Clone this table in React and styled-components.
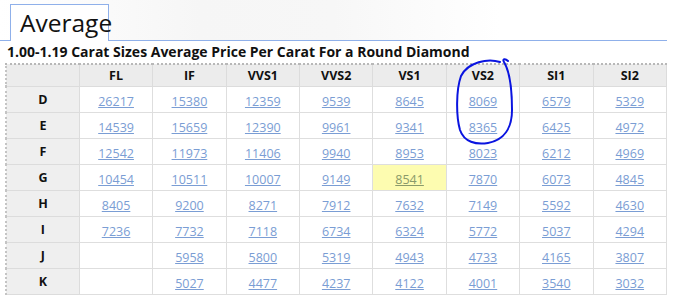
import React from 'react'
import styled, { createGlobalStyle } from 'styled-components';

const Global = createGlobalStyle`
    body {
        margin: 0;
        background: #fff;
        font-family: "Open Sans", "Noto Sans", sans-serif;
    }
`;

const Page = styled.div`
    position: relative;
    width: 686px;
    height: 300px;
    overflow: hidden;
`;

const TabBar = styled.div`
    display: flex;
    align-items: flex-end;
    width: 667px;
    height: 41px;
    border-bottom: 1px solid #8fb0ea;
    box-sizing: border-box;
    background: linear-gradient(90deg, #fff 0%, #f6f6f6 30%, #f7f7f7 50%, #fff 75%);
`;

const Tab = styled.div`
    margin-left: 10px;
    margin-bottom: -1px;
    width: 99px;
    height: 37px;
    box-sizing: border-box;
    border: 1px solid #8fb0ea;
    border-bottom: none;
    background: #fff;
    font-size: 24.5px;
    line-height: 36px;
    padding-left: 9px;
    color: #111;
`;

const Title = styled.div`
    margin: 1px 0 0 7px;
    font-size: 14px;
    font-weight: 700;
    line-height: 20px;
    color: #111;
`;

const Table = styled.table`
    margin: 1px 0 0 5px;
    width: 662px;
    border-collapse: collapse;
    table-layout: fixed;
    border-top: 2px dotted #b8b8b8;
    border-left: 2px dotted #c4c4c4;
`;

const Th = styled.th`
    height: 21px;
    padding: 0;
    background: #ececec;
    border: 1px solid #dcdcdc;
    font-size: 12.5px;
    font-weight: 700;
    color: #111;
    text-align: center;
`;

const RowHead = styled.th`
    height: 25px;
    padding: 0;
    background: #efefef;
    border: 1px solid #dcdcdc;
    font-size: 12.5px;
    font-weight: 700;
    color: #111;
`;

const Td = styled.td`
    height: 25px;
    padding: 0;
    text-align: center;
    border: 1px solid #dedede;
    background: ${p => (p.$hot ? '#fdfcb0' : '#fff')};
`;

const Price = styled.a`
    font-size: 12.5px;
    color: ${p => (p.$hot ? '#8a9a6a' : '#7a9dd4')};
    text-decoration: underline;
`;

const Circle = styled.svg`
    position: absolute;
    left: 452px;
    top: 54px;
`;

const clarities = ['FL', 'IF', 'VVS1', 'VVS2', 'VS1', 'VS2', 'SI1', 'SI2'];

const rows = [
    ['D', ['26217', '15380', '12359', '9539', '8645', '8069', '6579', '5329']],
    ['E', ['14539', '15659', '12390', '9961', '9341', '8365', '6425', '4972']],
    ['F', ['12542', '11973', '11406', '9940', '8953', '8023', '6212', '4969']],
    ['G', ['10454', '10511', '10007', '9149', '8541', '7870', '6073', '4845']],
    ['H', ['8405', '9200', '8271', '7912', '7632', '7149', '5592', '4630']],
    ['I', ['7236', '7732', '7118', '6734', '6324', '5772', '5037', '4294']],
    ['J', ['', '5958', '5800', '5319', '4943', '4733', '4165', '3807']],
    ['K', ['', '5027', '4477', '4237', '4122', '4001', '3540', '3032']],
];

const App = () => {
    return (
        <Page>
            <Global />
            <TabBar>
                <Tab>Average</Tab>
            </TabBar>
            <Title>1.00-1.19 Carat Sizes Average Price Per Carat For a Round Diamond</Title>
            <Table>
                <thead>
                    <tr>
                        <Th></Th>
                        {clarities.map(c => <Th key={c}>{c}</Th>)}
                    </tr>
                </thead>
                <tbody>
                    {rows.map(([color, prices]) => (
                        <tr key={color}>
                            <RowHead>{color}</RowHead>
                            {prices.map((p, i) => {
                                const hot = color === 'G' && clarities[i] === 'VS1';
                                return (
                                    <Td key={i} $hot={hot}>
                                        {p && <Price href="#" $hot={hot}>{p}</Price>}
                                    </Td>
                                );
                            })}
                        </tr>
                    ))}
                </tbody>
            </Table>
            {/* hand drawn marker around the VS2 column */}
            <Circle width="70" height="95" viewBox="0 0 70 95">
                <path
                    d="M48 8 C36 4 16 8 9 22 C4 36 4 62 8 76 C12 88 24 91 36 89 C52 86 60 74 60 56 C60 38 58 18 52 8 C50 5 53 4 56 7"
                    fill="none"
                    stroke="#0a14e0"
                    strokeWidth="2"
                    strokeLinecap="round"
                />
            </Circle>
        </Page>
    )
}

export default App;
